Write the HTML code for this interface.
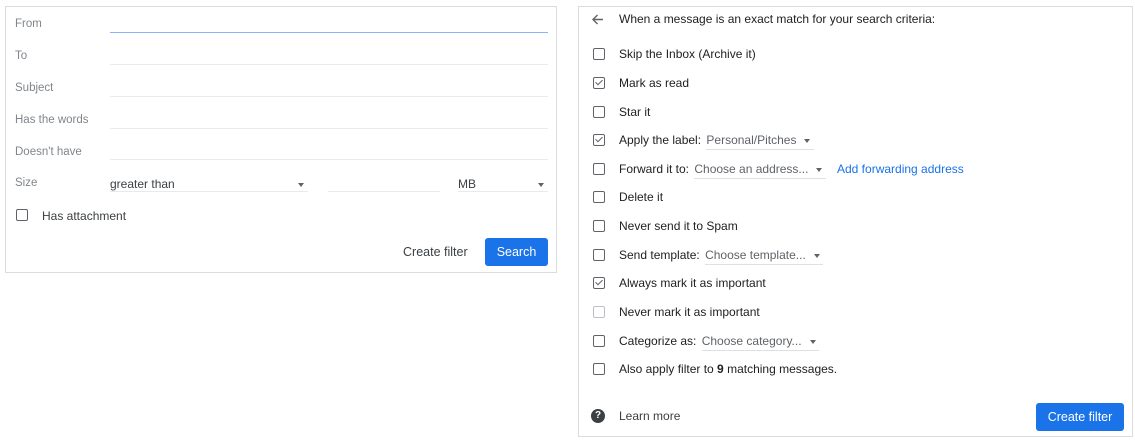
<!DOCTYPE html><html><head><style>
body{margin:0;width:1135px;height:440px;background:#fff;font-family:"Liberation Sans",sans-serif;position:relative;overflow:hidden}
.a{position:absolute;white-space:nowrap}
.p{position:absolute;border:1px solid #dadce0;background:#fff}
.l{font-size:11.5px;color:#80868b}
.ln{position:absolute;height:1px;background:#e8eaed}
.cb{position:absolute;width:10px;height:10px;border:1.5px solid #5f6368;border-radius:2px}
.t{font-size:12px;color:#202124}
.dd{font-size:12px;color:#5f6368;border-bottom:1px solid #e0e0e0;padding-bottom:2px}
.ar{display:inline-block;width:0;height:0;border-left:3.5px solid transparent;border-right:3.5px solid transparent;border-top:4px solid #5f6368;vertical-align:middle;margin-left:8px}
.btn{position:absolute;background:#1a73e8;color:#fff;border-radius:3px;font-size:12.5px;text-align:center}
.ck::after{content:"";position:absolute;left:2.5px;top:0px;width:3px;height:6px;border:solid #5f6368;border-width:0 1.5px 1.5px 0;transform:rotate(45deg)}
</style></head><body>
<div class="p" style="left:5px;top:6px;width:550px;height:265px"></div>
<div class="a l" style="left:15px;top:18px">From</div>
<div class="a l" style="left:15px;top:50px">To</div>
<div class="a l" style="left:15px;top:82px">Subject</div>
<div class="a l" style="left:15px;top:114px">Has the words</div>
<div class="a l" style="left:15px;top:146px">Doesn't have</div>
<div class="a l" style="left:15px;top:177px">Size</div>
<div class="ln" style="left:110px;top:32px;width:438px;background:#8ab4f8"></div>
<div class="ln" style="left:110px;top:64px;width:438px"></div>
<div class="ln" style="left:110px;top:96px;width:438px"></div>
<div class="ln" style="left:110px;top:128px;width:438px"></div>
<div class="ln" style="left:110px;top:159px;width:438px"></div>
<div class="a t" style="left:110px;top:177px;color:#3c4043">greater than</div>
<div class="a" style="left:298px;top:183px;border-left:3.5px solid transparent;border-right:3.5px solid transparent;border-top:4px solid #5f6368"></div>
<div class="ln" style="left:110px;top:191px;width:198px"></div>
<div class="ln" style="left:328px;top:191px;width:112px"></div>
<div class="a t" style="left:458px;top:177px;color:#3c4043">MB</div>
<div class="a" style="left:538px;top:183px;border-left:3.5px solid transparent;border-right:3.5px solid transparent;border-top:4px solid #5f6368"></div>
<div class="ln" style="left:458px;top:191px;width:90px"></div>
<div class="cb" style="left:16px;top:209px"></div>
<div class="a t" style="left:42px;top:209px;color:#3c4043">Has attachment</div>
<div class="a t" style="left:403px;top:245px;color:#3c4043;font-size:12.5px">Create filter</div>
<div class="btn" style="left:485px;top:238px;width:63px;height:28px;line-height:28px">Search</div>

<div class="p" style="left:578px;top:6px;width:553px;height:429px"></div>
<svg class="a" style="left:591px;top:13px" width="13" height="13" viewBox="0 0 13 13"><path d="M12 6.5H2M6.5 2L2 6.5 6.5 11" stroke="#5f6368" stroke-width="1.4" fill="none"/></svg>
<div class="a t" style="left:619px;top:12px">When a message is an exact match for your search criteria:</div>

<div class="cb" style="left:593px;top:48px"></div><div class="a t" style="left:619px;top:47px">Skip the Inbox (Archive it)</div>
<div class="cb ck" style="left:593px;top:77px"></div><div class="a t" style="left:619px;top:76px">Mark as read</div>
<div class="cb" style="left:593px;top:106px"></div><div class="a t" style="left:619px;top:105px">Star it</div>
<div class="cb ck" style="left:593px;top:134px"></div><div class="a t" style="left:619px;top:133px">Apply the label: <span class="dd" style="margin-left:2px">Personal/Pitches<span class="ar"></span>&nbsp;</span></div>
<div class="cb" style="left:593px;top:163px"></div><div class="a t" style="left:619px;top:162px">Forward it to: <span class="dd" style="margin-left:2px">Choose an address...<span class="ar"></span>&nbsp;</span></div>
<div class="a t" style="left:837px;top:162px;color:#1a73e8">Add forwarding address</div>
<div class="cb" style="left:593px;top:191px"></div><div class="a t" style="left:619px;top:190px">Delete it</div>
<div class="cb" style="left:593px;top:220px"></div><div class="a t" style="left:619px;top:219px">Never send it to Spam</div>
<div class="cb" style="left:593px;top:249px"></div><div class="a t" style="left:619px;top:248px">Send template: <span class="dd" style="margin-left:2px">Choose template...<span class="ar"></span>&nbsp;</span></div>
<div class="cb ck" style="left:593px;top:277px"></div><div class="a t" style="left:619px;top:276px">Always mark it as important</div>
<div class="cb" style="left:593px;top:306px;border-color:#bdc1c6"></div><div class="a t" style="left:619px;top:305px">Never mark it as important</div>
<div class="cb" style="left:593px;top:335px"></div><div class="a t" style="left:619px;top:334px">Categorize as: <span class="dd" style="margin-left:2px">Choose category...<span class="ar"></span>&nbsp;</span></div>
<div class="cb" style="left:593px;top:363px"></div><div class="a t" style="left:619px;top:362px">Also apply filter to <b>9</b> matching messages.</div>
<div class="a" style="left:591px;top:409px;width:14px;height:14px;border-radius:50%;background:#3c4043;color:#fff;font-size:10px;font-weight:bold;text-align:center;line-height:14px">?</div>
<div class="a t" style="left:619px;top:409px;color:#3c4043">Learn more</div>
<div class="btn" style="left:1036px;top:403px;width:88px;height:28px;line-height:28px">Create filter</div>
</body></html>
